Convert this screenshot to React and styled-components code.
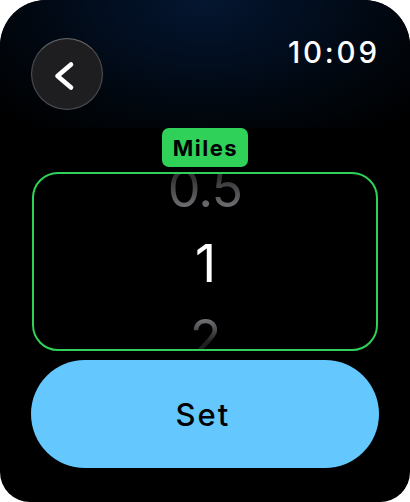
import styled, { createGlobalStyle } from 'styled-components';

const GlobalStyle = createGlobalStyle`
  html, body {
    margin: 0;
    padding: 0;
    background: #ffffff;
  }
  body {
    font-family: 'Inter', 'Noto Sans', sans-serif;
  }
`;

const App = () => {
  return (
    <>
      <GlobalStyle />
      <Watch>
        <Header>
          <BackButton aria-label='back'>
            <svg width='72' height='72' viewBox='0 0 72 72'>
              <path
                d='M40 26.5 L26.5 38 L40 49.5'
                fill='none'
                stroke='#ffffff'
                strokeWidth='4.6'
                strokeLinecap='round'
                strokeLinejoin='round'
              />
            </svg>
          </BackButton>
          <Time>10:09</Time>
        </Header>
        <Body>
          <UnitBadge>Miles</UnitBadge>
          <Picker>
            <PickerList>
              <PickerItem $muted>0.5</PickerItem>
              <PickerItem>1</PickerItem>
              <PickerItem $muted>2</PickerItem>
            </PickerList>
          </Picker>
          <SetButton>Set</SetButton>
        </Body>
      </Watch>
    </>
  );
};

const Watch = styled.div`
  width: 410px;
  height: 502px;
  background: #000000;
  border-radius: 46px 46px 30px 30px;
  overflow: hidden;
  display: flex;
  flex-direction: column;
`;

const Header = styled.div`
  height: 128px;
  box-sizing: border-box;
  padding: 38px 33px 0 31px;
  display: flex;
  justify-content: space-between;
  align-items: flex-start;
  background: radial-gradient(
    ellipse 70% 130% at 50% 0%,
    #041630 0%,
    #020e20 35%,
    #01070f 65%,
    #000000 100%
  );
`;

const BackButton = styled.button`
  width: 72px;
  height: 72px;
  padding: 0;
  box-sizing: border-box;
  border-radius: 50%;
  border: 1.5px solid rgba(255, 255, 255, 0.22);
  border-top-color: rgba(255, 255, 255, 0.32);
  background: #1e1e20;
  display: flex;
  align-items: center;
  justify-content: center;
  box-shadow: inset 0 0 2px rgba(255, 255, 255, 0.08);
  cursor: pointer;

  svg {
    flex-shrink: 0;
  }
`;

const Time = styled.div`
  font-size: 29.5px;
  line-height: 1;
  font-weight: 500;
  color: #ffffff;
  letter-spacing: 2.8px;
  margin-right: -2.8px;
`;

const Body = styled.div`
  display: flex;
  flex-direction: column;
  align-items: center;
  padding: 0 31px;
`;

const UnitBadge = styled.div`
  width: 86px;
  height: 39px;
  box-sizing: border-box;
  display: flex;
  align-items: center;
  justify-content: center;
  border-radius: 7px;
  background: #30d158;
  color: #000000;
  font-size: 22px;
  font-weight: 700;
  letter-spacing: 1.5px;
  padding-left: 1px;
`;

const Picker = styled.div`
  margin-top: 5px;
  width: 346px;
  height: 179px;
  box-sizing: border-box;
  border: 2.6px solid #30d158;
  border-radius: 26px;
  overflow: hidden;
  display: flex;
  justify-content: center;
`;

const PickerList = styled.div`
  height: 100%;
  padding-top: 3px;
  box-sizing: border-box;
  display: flex;
  flex-direction: column;
  justify-content: center;
  align-items: center;
`;

const PickerItem = styled.div`
  flex-shrink: 0;
  height: 75px;
  line-height: 75px;
  font-size: 52px;
  font-weight: 400;
  letter-spacing: -1px;
  color: ${(props) => (props.$muted ? '#7d7d82' : '#ffffff')};
  ${(props) =>
    props.$muted &&
    `
    &:first-child {
      -webkit-mask-image: linear-gradient(to bottom, rgba(0,0,0,0.4) 35%, #000 85%);
      mask-image: linear-gradient(to bottom, rgba(0,0,0,0.4) 35%, #000 85%);
    }
    &:last-child {
      -webkit-mask-image: linear-gradient(to bottom, #000 20%, rgba(0,0,0,0.25) 55%);
      mask-image: linear-gradient(to bottom, #000 20%, rgba(0,0,0,0.25) 55%);
    }
  `}
`;

const SetButton = styled.button`
  margin-top: 9px;
  width: 348px;
  height: 108px;
  border: none;
  border-radius: 54px;
  background: #64c7fd;
  color: #000000;
  font-family: 'Inter', 'Noto Sans', sans-serif;
  font-size: 31px;
  font-weight: 500;
  letter-spacing: 2px;
  padding-left: 2px;
  cursor: pointer;
`;

export default App;
